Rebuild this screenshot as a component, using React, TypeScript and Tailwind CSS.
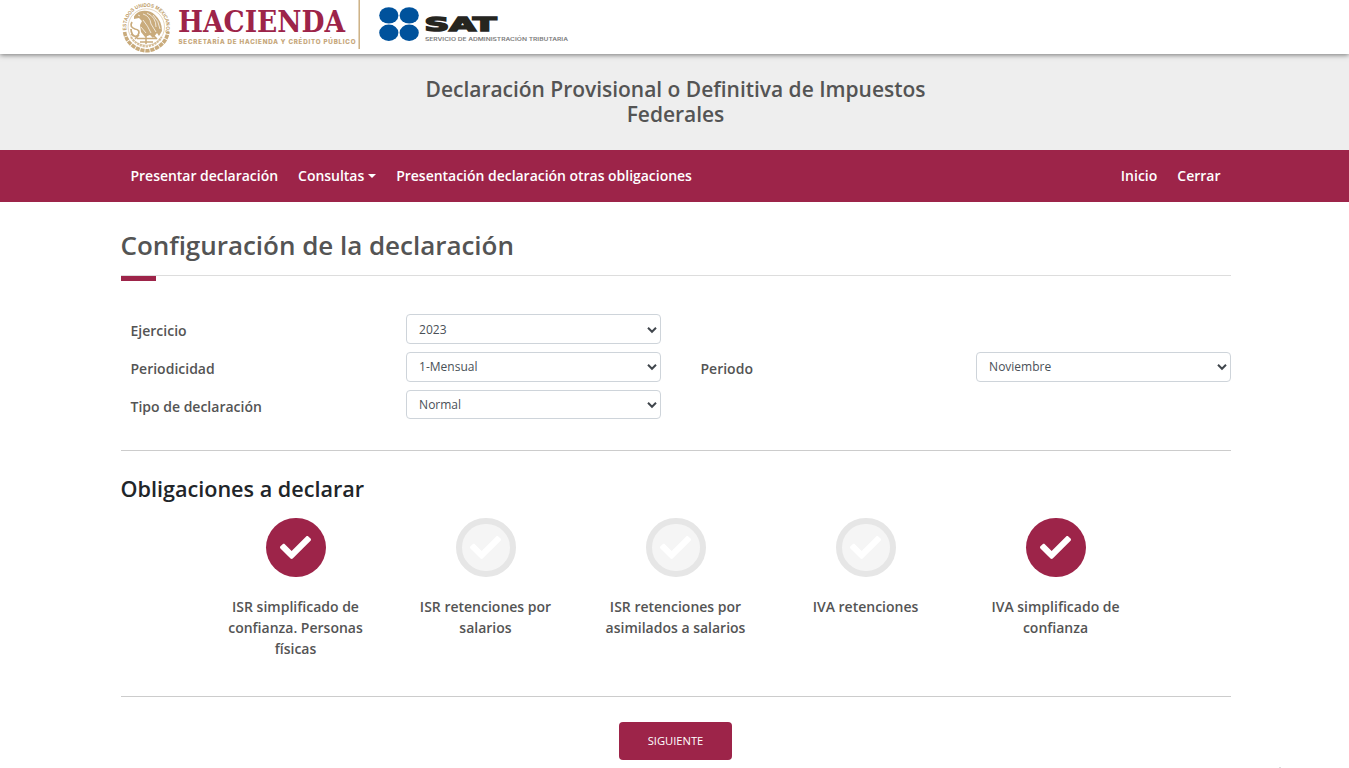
import { FaCheck } from "react-icons/fa";

const obligations = [
  { label: "ISR simplificado de confianza. Personas físicas", active: true },
  { label: "ISR retenciones por salarios", active: false },
  { label: "ISR retenciones por asimilados a salarios", active: false },
  { label: "IVA retenciones", active: false },
  { label: "IVA simplificado de confianza", active: true },
];

function HaciendaLogo() {
  return (
    <svg width="240" height="54" viewBox="120 0 240 54" className="block overflow-visible">
      <defs>
        <path id="seal-arc" d="M127.600 34 A20 20 0 1 1 164.900 34" />
      </defs>
      <g fill="none" stroke="#c9ab7c">
        <circle cx="146.300" cy="27" r="18.200" strokeWidth=".7" strokeOpacity=".7" />
        <path d="M124.600 32 q1.500 9 8.500 14 q6 4.500 13.200 4.800 q7.200 -.3 13.200 -4.800 q7 -5 8.500 -14" strokeWidth="3.600" strokeDasharray="4.200 .8" />
        <path d="M131 37 q5 8.500 15.300 9.500 q10.300 -1 15.300 -9.500" strokeWidth="2.200" strokeOpacity=".75" strokeDasharray="2.200 .8" />
        <path d="M132 22 q-3 5 3 7 q6 1 3 6 q-3 3 -7 -1 M131 29 q0 6 5 8" strokeWidth="1.700" />
        <path d="M137 38.500 h19 M140 42 h13 M146 36 v8 M139 35 l-4 4 M153 35 l4 4" strokeWidth="1.500" />
      </g>
      <path d="M134 16.500 q3 -5 8 -5.500 q8 -1 13 4 q7 6 7 16 l-3 5 l-2 -3 l-4 5 l-3 -3 l-5 2 l-4 -5 l-1 -7 l2 -4 l-3 -3 l-5 1z" fill="#c9ab7c" />
      <g fill="none" stroke="#fff" strokeWidth=".9" strokeOpacity=".8">
        <path d="M143 14 q7 2 8 10 M147 13 q9 4 9 14 M143 20 q5 6 8 13 M151 24 l5 8 M141 27 l5 6 M153 15 q6 6 7 14 M138 15 l2 1" />
      </g>
      <text fill="#bd9b65" fontSize="5.200" fontWeight="700" fontFamily="'Liberation Sans', sans-serif">
        <textPath href="#seal-arc" startOffset="4" textLength="72" lengthAdjust="spacingAndGlyphs">ESTADOS UNIDOS MEXICANOS</textPath>
      </text>
      <text x="178" y="31.800" textLength="167" lengthAdjust="spacingAndGlyphs" fill="#9d2449" fontSize="29.500" fontWeight="700" fontFamily="'DejaVu Serif', serif">HACIENDA</text>
      <text x="178.500" y="44" textLength="177" fill="#c4a373" stroke="#c4a373" strokeWidth=".15" fontSize="6.200" fontWeight="700" fontFamily="Inter, sans-serif">SECRETARÍA DE HACIENDA Y CRÉDITO PÚBLICO</text>
      <rect x="358.500" y="0" width="1.400" height="49" fill="#c9ab7c" />
    </svg>
  );
}

function SatLogo() {
  return (
    <svg width="210" height="54" viewBox="360 0 210 54" className="block overflow-visible">
      <g fill="#00529c">
        <ellipse cx="388.800" cy="15.400" rx="9.600" ry="8.200" />
        <ellipse cx="409.200" cy="15.400" rx="9.600" ry="8.200" />
        <ellipse cx="388.800" cy="32.800" rx="9.600" ry="8.200" />
        <ellipse cx="409.200" cy="32.800" rx="9.600" ry="8.200" />
      </g>
      <text x="424.500" y="31.300" textLength="72" lengthAdjust="spacingAndGlyphs" fill="#26251f" stroke="#26251f" strokeWidth="1.600" fontSize="19.500" fontWeight="700" fontFamily="'DejaVu Sans', sans-serif">SAT</text>
      <text x="425" y="40.800" textLength="143" lengthAdjust="spacingAndGlyphs" fill="#7c7c7c" fontSize="5.200" fontWeight="600" fontFamily="Inter, sans-serif">SERVICIO DE ADMINISTRACIÓN TRIBUTARIA</text>
    </svg>
  );
}

function SelectBox({ value, className = "h-[30px]" }: { value: string; className?: string }) {
  return (
    <div className={`flex w-[255px] shrink-0 items-center justify-between rounded-[4px] border border-[#ced4da] bg-white pl-[12.6px] pr-[3px] text-[12px] text-[#495057] ${className}`}>
      <span>{value}</span>
      <svg width="10" height="8" viewBox="0 0 10 8" fill="none" stroke="#40464c" strokeWidth="2">
        <path d="M1 1.800 L5 5.800 L9 1.800" />
      </svg>
    </div>
  );
}

function Label({ children, className = "w-[285px]" }: { children: string; className?: string }) {
  return <div className={`shrink-0 pt-[6px] pl-2.5 text-[14px] leading-[21px] font-semibold text-[#545454] ${className}`}>{children}</div>;
}

export default function App() {
  return (
    <div className="relative h-[768px] w-full overflow-hidden bg-white font-['Open_Sans',sans-serif] text-[14px] text-[#545454]">
      <header className="relative z-10 h-[54px] bg-white shadow-[0_1px_5px_rgba(0,0,0,0.5)]">
        <div className="flex pl-[120px]">
          <HaciendaLogo />
          <SatLogo />
        </div>
      </header>
      <div className="flex h-[96px] justify-center bg-[#eeeeee] pt-[23px]">
        <h1 className="w-[555px] pl-[2px] text-center text-[21px] leading-[25px] font-semibold tracking-[-0.03px]">Declaración Provisional o Definitiva de Impuestos Federales</h1>
      </div>
      <nav className="h-[52px] bg-[#9d2449] text-white">
        <div className="mx-auto flex h-full w-[1110px] translate-x-[1px] items-center justify-between px-2.5 pb-[2px] font-semibold">
          <div className="flex items-center gap-5 tracking-[-0.025px]">
            <span>Presentar declaración</span>
            <span className="flex items-center gap-[4px]">
              Consultas
              <svg width="8" height="4" viewBox="0 0 8 4" fill="#fff" className="mt-[2px]"><path d="M0 0h8L4 4z" /></svg>
            </span>
            <span>Presentación declaración otras obligaciones</span>
          </div>
          <div className="flex gap-5">
            <span>Inicio</span>
            <span>Cerrar</span>
          </div>
        </div>
      </nav>
      <main className="mx-auto w-[1110px] translate-x-[1px]">
        <div className="h-[74px] border-b border-[#dddddd] pt-[26px]">
          <h2 className="text-[26px] leading-[34px] font-semibold tracking-[-0.03px]">Configuración de la declaración</h2>
        </div>
        <div className="h-[5px] w-[35px] bg-[#9d2449]" />
        <section className="flex h-[170px] flex-col gap-2 border-b border-[#cccccc] pt-[33px]">
          <div className="flex h-[30px]">
            <Label>Ejercicio</Label>
            <SelectBox value="2023" className="h-[30px] pt-px" />
          </div>
          <div className="flex h-[30px]">
            <Label>Periodicidad</Label>
            <SelectBox value="1-Mensual" />
            <Label className="ml-[30px] w-[285px]">Periodo</Label>
            <SelectBox value="Noviembre" />
          </div>
          <div className="flex h-[30px]">
            <Label>Tipo de declaración</Label>
            <SelectBox value="Normal" className="h-[29px]" />
          </div>
        </section>
        <section className="h-[246px] border-b border-[#cccccc] pt-[24px]">
          <h3 className="text-[21.6px] leading-[27px] font-semibold text-[#212529]">Obligaciones a declarar</h3>
          <div className="mt-[16px] flex justify-center">
            {obligations.map((item) => (
              <div key={item.label} className="flex w-[190px] flex-col items-center px-5">
                <div
                  className={
                    item.active
                      ? "flex h-[59px] w-[60px] items-center justify-center rounded-full bg-[#9d2449] text-white"
                      : "flex h-[59px] w-[60px] items-center justify-center rounded-full border-[6px] border-[#e6e6e6] bg-[#f5f5f5] text-white"
                  }
                >
                  <FaCheck size={31} />
                </div>
                <p className="mt-[19px] text-center leading-[21px] font-semibold">{item.label}</p>
              </div>
            ))}
          </div>
        </section>
        <div className="flex justify-center pt-[25px]">
          <button className="h-[38px] w-[113px] rounded-[4px] bg-[#9d2449] text-[11.2px] text-white">SIGUIENTE</button>
        </div>
      </main>
      <div className="absolute bottom-0 left-[1279px] h-px w-[2px] bg-[#dddddd]" />
    </div>
  );
}
